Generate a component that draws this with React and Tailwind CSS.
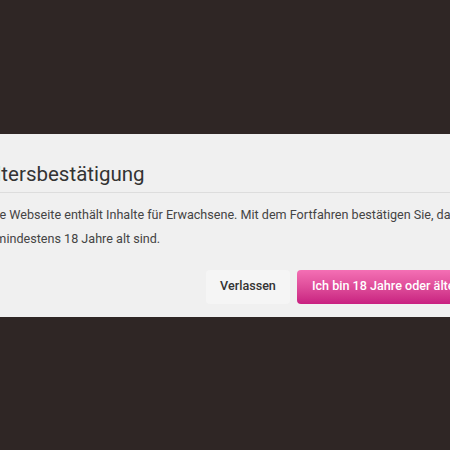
import React from 'react';

const App = () => {
  return (
    <div className="w-[450px] h-[450px] bg-[#2f2625] overflow-hidden flex flex-col justify-center" style={{ fontFamily: 'Roboto, "Liberation Sans", sans-serif' }}>
      <div className="ml-[-43px] w-[535px] shrink-0 bg-[#f0f0f0]">
        <div className="pl-[26px] pr-[18px] pt-[26px] pb-[4px] border-b border-[#dddddd]">
          <h2 className="text-[20.5px] leading-[28px] text-[#333333]">Altersbestätigung</h2>
        </div>
        <div className="px-[18px] pt-[10px]">
          <p className="text-[12.6px] leading-[24px] text-[#444444]">
            Diese Webseite enthält Inhalte für Erwachsene. Mit dem Fortfahren bestätigen Sie, dass Sie mindestens 18 Jahre alt sind.
          </p>
        </div>
        <div className="flex justify-end gap-[7px] px-[18px] pt-[19px] pb-[13px]">
          <button className="h-[34px] px-[14px] rounded bg-[#f5f5f5] text-[12.6px] font-medium text-[#333333]">
            Verlassen
          </button>
          <button className="h-[34px] px-[15px] rounded bg-gradient-to-b from-[#f46fb4] to-[#c81f80] text-[12.6px] font-medium text-white">
            Ich bin 18 Jahre oder älter
          </button>
        </div>
      </div>
    </div>
  );
};

export default App;
